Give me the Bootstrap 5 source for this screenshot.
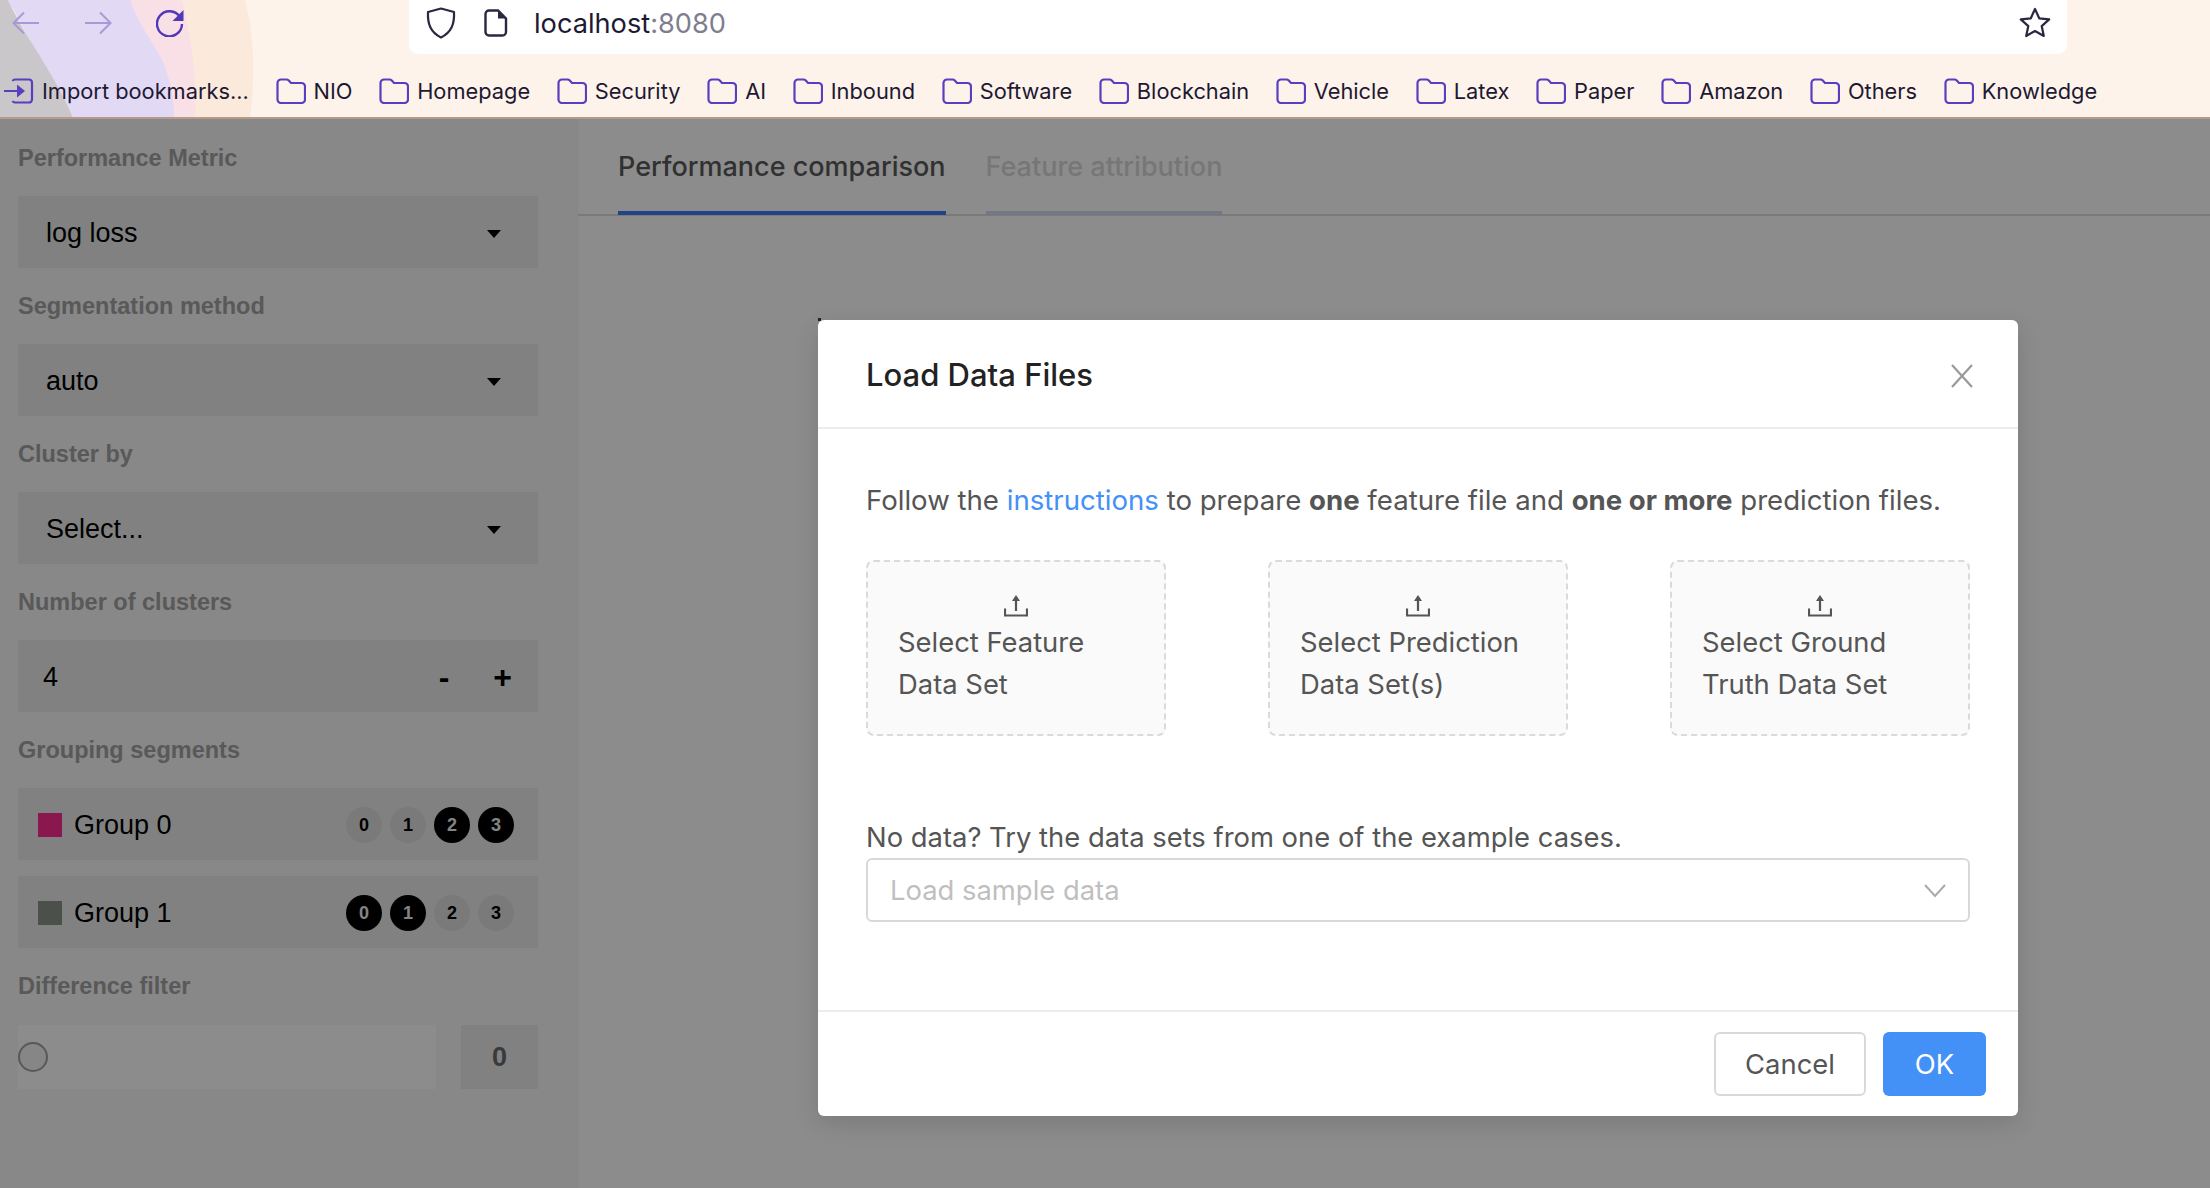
<!DOCTYPE html>
<html lang="en">
<head>
<meta charset="UTF-8">
<meta name="viewport" content="width=device-width, initial-scale=1.0">
<title>Load Data Files</title>
<link href="https://cdn.jsdelivr.net/npm/bootstrap@5.3.3/dist/css/bootstrap.min.css" rel="stylesheet">
<style>
html, body { height: 100%; }
body { background: #fff; overflow: hidden; font-family: "Liberation Sans", Arial, sans-serif; }

/* browser chrome */
.chrome { position: relative; height: 119px; background: #fdf3ea; border-bottom: 2px solid #b59a8b; font-family: Inter, sans-serif; overflow: hidden; }
.chrome-bg { position: absolute; left: 0; top: 0; }
.toolbar-row { position: relative; height: 54px; }
.nav-btns { width: 409px; padding: 0 0 8px 12px; gap: 44px; }
.url-bar { width: 1658px; height: 54px; background: #fff; border-radius: 0 0 9px 9px; padding: 0 16px 9px 17px; }
.url-text { font-size: 27.2px; color: #1d1933; margin-left: 26px; position: relative; top: 2px; }
.url-port { color: #807d8f; }
.page-ic { margin-left: 28px; }
.marks-row { position: relative; height: 64px; padding: 10px 0 0 4px; font-size: 21.8px; color: #1d1933; }
.mark-item { gap: 8px; margin-right: 26.7px; white-space: nowrap; }

/* sidebar */
.app-body { height: calc(100% - 119px); }
.side-panel { width: 578px; flex: none; height: 100%; padding: 0 39px 0 18px; background: #f8f8f8; border-right: 1px solid #f4f4f4; }
.side-label { height: 76px; padding-top: 2px; color: #a2a2a2; font-size: 23.5px; font-weight: 700; }
.side-label.first-label { height: 77px; }
.side-row { height: 72px; background: #ececec; color: #000; font-size: 27px; }
.select-row { padding: 3px 37px 0 28px; }
.caret-down { width: 0; height: 0; border-left: 7px solid transparent; border-right: 7px solid transparent; border-top: 8px solid #000; }
.num-row { padding: 2px 26px 0 25px; }
.num-btns { gap: 44px; font-size: 32px; font-weight: 700; }
.group-row { padding: 2px 24px 0 20px; }
.group-gap { margin-top: 16px; }
.swatch { width: 24px; height: 24px; margin-right: 12px; }
.swatch-pink { background: #fb2b8e; }
.swatch-gray { background: #8a9288; }
.seg-dots { gap: 8px; }
.seg-dot { width: 36px; height: 36px; border-radius: 50%; background: #dedede; color: #000; font-size: 18px; font-weight: 700; }
.seg-dot.seg-on { background: #000; color: #f0f0f0; }
.slider-row { height: 64px; gap: 25px; margin-top: 1px; }
.slider-track { width: 419px; background: #fff; }
.slider-knob { width: 30px; height: 30px; border-radius: 50%; border: 2px solid #a0a0a0; background: #f4f4f4; }
.slider-val { width: 77px; background: #ececec; color: #6b6b6b; font-size: 27px; font-weight: 700; }

/* tabs */
.main-panel { min-width: 0; }
.result-tabs { height: 97px; padding-left: 40px; gap: 40px; border-bottom: 2px solid #dedede; align-items: flex-end; }
.result-tabs .nav-link { height: 95px; padding: 27px 0 0; font-family: Inter, sans-serif; font-size: 27px; font-weight: 500; color: #595959; border-bottom: 4px solid #407af7; margin-bottom: -1px; }
.result-tabs .nav-link.tab-off { color: #d8d8d8; border-bottom-color: #cfdcf2; }

/* modal */
.dim-layer { position: absolute; left: 0; right: 0; top: 119px; bottom: 0; background: rgba(0,0,0,.45); }
.load-modal { position: absolute; left: 818px; top: 201px; width: 1200px; height: 796px; background: #fff; border: 0; border-radius: 6px; box-shadow: 0 8px 24px rgba(0,0,0,.12); font-family: Inter, sans-serif; color: #555; }
.load-modal::before { content: ""; position: absolute; left: 0; top: -2px; width: 3px; height: 3px; background: #222; }
.load-modal .modal-header { height: 109px; padding: 3px 45px 0 48px; border-bottom: 2px solid #ededed; }
.load-title { font-size: 31px; font-weight: 500; color: #222; margin: 0; }
.x-btn { background: none; border: 0; padding: 2px 0 0; line-height: 0; }
.load-modal .modal-body { padding: 51px 48px 0; flex: none; height: 581px; }
.intro-text { font-size: 27.6px; line-height: 40px; margin: 0 0 40px; }
.intro-text strong { font-weight: 700; }
.intro-text a { color: #4390f7; text-decoration: none; }
.drop-row { gap: 102px; }
.drop-box { width: 300px; height: 176px; background: #fafafa; border: 2px dashed #dadada; border-radius: 8px; padding: 33px 20px 0 30px; font-size: 27.4px; line-height: 42px; }
.drop-icon { display: block; margin: 0 auto 4px; position: relative; left: -5px; }
.try-text { font-size: 27.4px; line-height: 40px; margin: 81px 0 0; }
.sample-select { height: 64px; border: 2px solid #d9d9d9; border-radius: 6px; padding: 1px 22px 0; margin-top: 1px; color: #bfbfbf; font-size: 27.4px; }
.load-modal .modal-footer { height: 106px; padding: 20px 32px 0 0; gap: 17px; border-top: 2px solid #ededed; align-items: flex-start; flex-wrap: nowrap; }
.load-modal .modal-footer .btn { margin: 0; height: 64px; font-size: 27.4px; border-radius: 6px; padding: 1px 0 0; }
.btn-cancel { width: 152px; background: #fff; border: 2px solid #d9d9d9; color: #555; }
.btn-ok { width: 103px; background: #4390f7; border: 0; color: #fff; }
</style>
</head>
<body>
<svg width="0" height="0" class="position-absolute">
  <defs>
    <symbol id="folder-ic" viewBox="0 0 30 26">
      <path d="M1.500 5a3.500 3.500 0 0 1 3.500-3.500h5.500c1 0 1.700.4 2.300 1l2.200 2.500h10.500a3.500 3.500 0 0 1 3.500 3.500v13a3.500 3.500 0 0 1-3.500 3.500H5a3.500 3.500 0 0 1-3.500-3.500z" fill="none" stroke="#5a3ec0" stroke-width="2.200"/>
    </symbol>
    <symbol id="upload-ic" viewBox="0 0 24 22">
      <path d="M12 2v14M1 13.500v7h22v-7" fill="none" stroke="#555" stroke-width="2.200"/>
      <path d="M12 0l4 6H8z" fill="#555"/>
    </symbol>
  </defs>
</svg>

<!-- browser toolbar -->
<div class="chrome">
  <svg class="chrome-bg" width="400" height="118">
    <path d="M0 0h400v118H0z" fill="#fdf3ea"/>
    <path d="M175 0h70c10 40 10 80 5 118h-70z" fill="#fbe9dc"/>
    <path d="M120 0h62c10 40 15 80 13 118H100z" fill="#f9dfe6"/>
    <path d="M8 0h122c10 30 30 50 36 70 6 18 8 32 8 48H73z" fill="#e2d9f4"/>
    <path d="M0 0h8c12 25 22 40 32 56 14 24 24 40 33 62H0z" fill="#c9c7ca"/>
  </svg>
  <div class="toolbar-row d-flex">
    <div class="nav-btns d-flex align-items-center">
      <svg width="28" height="24" viewBox="0 0 28 24"><path d="M27 12H2M12 1.500L1.500 12 12 22.500" fill="none" stroke="#a69ad8" stroke-width="2"/></svg>
      <svg width="28" height="24" viewBox="0 0 28 24"><path d="M1 12h25M16 1.500L26.500 12 16 22.500" fill="none" stroke="#a69ad8" stroke-width="2"/></svg>
      <svg width="28" height="28" viewBox="0 0 28 28"><path d="M24 8A12.500 12.500 0 1 0 26 15" fill="none" stroke="#5038b8" stroke-width="2.400"/><path d="M27.500 1v11h-11z" fill="#5038b8"/></svg>
    </div>
    <div class="url-bar d-flex align-items-center">
      <svg width="30" height="32" viewBox="0 0 30 32"><path d="M15 1.500L28 5c.6 12-2.500 20-13 25.500C4.500 25 1.400 17 2 5z" fill="none" stroke="#2b2740" stroke-width="2.200" stroke-linejoin="round"/></svg>
      <svg class="page-ic" width="24" height="28" viewBox="0 0 24 28"><path d="M5 1.500h9l8 8V23a3.500 3.500 0 0 1-3.500 3.500H5A3.500 3.500 0 0 1 1.500 23V5A3.500 3.500 0 0 1 5 1.500z" fill="none" stroke="#2b2740" stroke-width="2.400"/><path d="M14 1.500v8h8z" fill="#2b2740"/></svg>
      <span class="url-text">localhost<span class="url-port">:8080</span></span>
      <svg class="ms-auto" width="32" height="31" viewBox="0 0 32 31"><path d="M16 2l4.200 9.300 10 1.100-7.500 6.700 2.100 9.900L16 24l-8.800 5 2.100-9.900-7.500-6.700 10-1.100z" fill="none" stroke="#2b2740" stroke-width="2.200" stroke-linejoin="round"/></svg>
    </div>
  </div>
  <div class="marks-row d-flex align-items-center">
    <div class="mark-item d-flex align-items-center">
      <svg width="30" height="26" viewBox="0 0 30 26"><path d="M11 1.500h14a3 3 0 0 1 3 3v17a3 3 0 0 1-3 3H11a3 3 0 0 1-2.500-1.500M8.500 3A3 3 0 0 1 11 1.500M0 13h14" fill="none" stroke="#5a3ec0" stroke-width="2.200"/><path d="M13 6.500l8 6.500-8 6.500z" fill="#5a3ec0"/></svg>
      <span>Import bookmarks...</span>
    </div>
    <div class="mark-item d-flex align-items-center"><svg width="30" height="26"><use href="#folder-ic"/></svg><span>NIO</span></div>
    <div class="mark-item d-flex align-items-center"><svg width="30" height="26"><use href="#folder-ic"/></svg><span>Homepage</span></div>
    <div class="mark-item d-flex align-items-center"><svg width="30" height="26"><use href="#folder-ic"/></svg><span>Security</span></div>
    <div class="mark-item d-flex align-items-center"><svg width="30" height="26"><use href="#folder-ic"/></svg><span>AI</span></div>
    <div class="mark-item d-flex align-items-center"><svg width="30" height="26"><use href="#folder-ic"/></svg><span>Inbound</span></div>
    <div class="mark-item d-flex align-items-center"><svg width="30" height="26"><use href="#folder-ic"/></svg><span>Software</span></div>
    <div class="mark-item d-flex align-items-center"><svg width="30" height="26"><use href="#folder-ic"/></svg><span>Blockchain</span></div>
    <div class="mark-item d-flex align-items-center"><svg width="30" height="26"><use href="#folder-ic"/></svg><span>Vehicle</span></div>
    <div class="mark-item d-flex align-items-center"><svg width="30" height="26"><use href="#folder-ic"/></svg><span>Latex</span></div>
    <div class="mark-item d-flex align-items-center"><svg width="30" height="26"><use href="#folder-ic"/></svg><span>Paper</span></div>
    <div class="mark-item d-flex align-items-center"><svg width="30" height="26"><use href="#folder-ic"/></svg><span>Amazon</span></div>
    <div class="mark-item d-flex align-items-center"><svg width="30" height="26"><use href="#folder-ic"/></svg><span>Others</span></div>
    <div class="mark-item d-flex align-items-center"><svg width="30" height="26"><use href="#folder-ic"/></svg><span>Knowledge</span></div>
  </div>
</div>

<!-- page -->
<div class="app-body d-flex">
  <aside class="side-panel">
    <div class="side-label first-label d-flex align-items-center">Performance Metric</div>
    <div class="side-row select-row d-flex align-items-center justify-content-between"><span>log loss</span><span class="caret-down"></span></div>
    <div class="side-label d-flex align-items-center">Segmentation method</div>
    <div class="side-row select-row d-flex align-items-center justify-content-between"><span>auto</span><span class="caret-down"></span></div>
    <div class="side-label d-flex align-items-center">Cluster by</div>
    <div class="side-row select-row d-flex align-items-center justify-content-between"><span>Select...</span><span class="caret-down"></span></div>
    <div class="side-label d-flex align-items-center">Number of clusters</div>
    <div class="side-row num-row d-flex align-items-center justify-content-between"><span>4</span><span class="num-btns d-flex"><span>-</span><span>+</span></span></div>
    <div class="side-label d-flex align-items-center">Grouping segments</div>
    <div class="side-row group-row d-flex align-items-center">
      <span class="swatch swatch-pink"></span><span>Group 0</span>
      <div class="seg-dots d-flex ms-auto">
        <span class="seg-dot d-flex align-items-center justify-content-center">0</span>
        <span class="seg-dot d-flex align-items-center justify-content-center">1</span>
        <span class="seg-dot seg-on d-flex align-items-center justify-content-center">2</span>
        <span class="seg-dot seg-on d-flex align-items-center justify-content-center">3</span>
      </div>
    </div>
    <div class="side-row group-row group-gap d-flex align-items-center">
      <span class="swatch swatch-gray"></span><span>Group 1</span>
      <div class="seg-dots d-flex ms-auto">
        <span class="seg-dot seg-on d-flex align-items-center justify-content-center">0</span>
        <span class="seg-dot seg-on d-flex align-items-center justify-content-center">1</span>
        <span class="seg-dot d-flex align-items-center justify-content-center">2</span>
        <span class="seg-dot d-flex align-items-center justify-content-center">3</span>
      </div>
    </div>
    <div class="side-label d-flex align-items-center">Difference filter</div>
    <div class="slider-row d-flex">
      <div class="slider-track d-flex align-items-center"><span class="slider-knob"></span></div>
      <div class="slider-val d-flex align-items-center justify-content-center">0</div>
    </div>
  </aside>
  <main class="main-panel flex-grow-1">
    <ul class="nav result-tabs">
      <li class="nav-item"><a class="nav-link" href="#">Performance comparison</a></li>
      <li class="nav-item"><a class="nav-link tab-off" href="#">Feature attribution</a></li>
    </ul>
  </main>
</div>

<!-- dialog -->
<div class="dim-layer">
  <div class="modal-content load-modal">
    <div class="modal-header">
      <h5 class="load-title">Load Data Files</h5>
      <button type="button" class="x-btn ms-auto" aria-label="Close">
        <svg width="22" height="24" viewBox="0 0 22 24"><path d="M1 1l20 22M21 1L1 23" fill="none" stroke="#999" stroke-width="2.200"/></svg>
      </button>
    </div>
    <div class="modal-body">
      <p class="intro-text">Follow the <a href="#">instructions</a> to prepare <strong>one</strong> feature file and <strong>one or more</strong> prediction files.</p>
      <div class="drop-row d-flex">
        <div class="drop-box"><svg class="drop-icon" width="24" height="22"><use href="#upload-ic"/></svg>Select Feature<br>Data Set</div>
        <div class="drop-box"><svg class="drop-icon" width="24" height="22"><use href="#upload-ic"/></svg>Select Prediction<br>Data Set(s)</div>
        <div class="drop-box"><svg class="drop-icon" width="24" height="22"><use href="#upload-ic"/></svg>Select Ground<br>Truth Data Set</div>
      </div>
      <p class="try-text">No data? Try the data sets from one of the example cases.</p>
      <div class="sample-select d-flex align-items-center justify-content-between">
        <span>Load sample data</span>
        <svg width="22" height="14" viewBox="0 0 22 14"><path d="M1 1l10 11L21 1" fill="none" stroke="#aaa" stroke-width="2"/></svg>
      </div>
    </div>
    <div class="modal-footer">
      <button type="button" class="btn btn-cancel">Cancel</button>
      <button type="button" class="btn btn-ok">OK</button>
    </div>
  </div>
</div>
<script src="https://cdn.jsdelivr.net/npm/bootstrap@5.3.3/dist/js/bootstrap.bundle.min.js"></script>
</body>
</html>
